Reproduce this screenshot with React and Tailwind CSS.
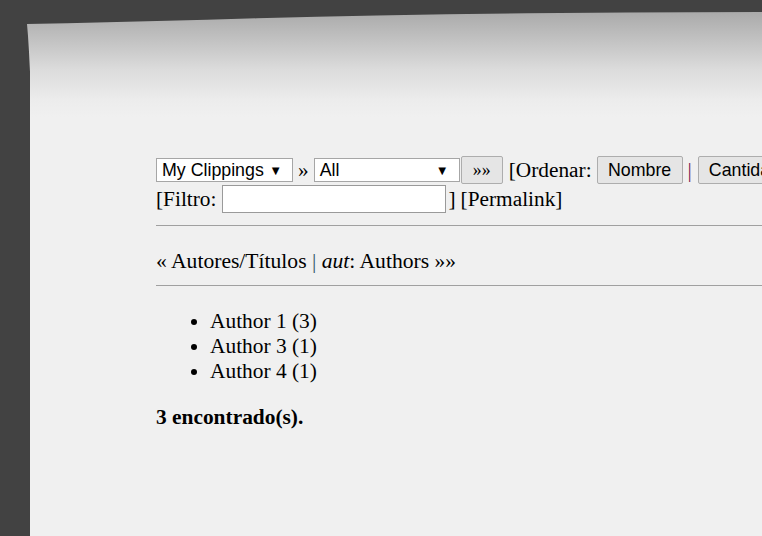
export default function App() {
  const serif = "font-['Liberation_Serif','Times_New_Roman',serif]";
  const sans = "font-['Liberation_Sans',Arial,sans-serif]";
  return (
    <div className="h-[536px] w-[762px] overflow-hidden bg-[#424242] pt-[12px] pl-[27px]">
      <div
        className={`h-[524px] w-[735px] overflow-hidden bg-[linear-gradient(to_bottom,#aaaaaa_0px,#c2c2c2_28px,#dcdcdc_58px,#ececec_88px,#f0f0f0_105px)] [clip-path:polygon(0px_12px,40px_11.2px,80px_10.3px,130px_9px,180px_7.7px,230px_6.3px,290px_4.8px,350px_3.4px,420px_2.2px,500px_1.2px,600px_0.5px,100%_0,100%_100%,3px_100%,3px_60px,2px_40px,1px_24px)] pl-[129px] pt-[144px] text-black ${serif}`}
      >
        <div className="w-[700px]">
          {/* Row 1 */}
          <div className="flex h-[28px] items-center whitespace-nowrap text-[21.33px] leading-[25px]">
            <div className={`flex h-[24px] w-[137px] items-center justify-between border border-[#a6a6a6] bg-white pl-[5px] pr-[10px] text-[17.8px] ${sans}`}>
              <span>My Clippings</span>
              <span className="text-[13px]">▼</span>
            </div>
            <span className="ml-[5px] mr-[5px]">»</span>
            <div className={`flex h-[24px] w-[146px] items-center justify-between border border-[#a6a6a6] bg-white pl-[5px] pr-[10px] text-[17.8px] ${sans}`}>
              <span>All</span>
              <span className="text-[13px]">▼</span>
            </div>
            <button className={`ml-[1px] flex h-[28px] w-[42px] items-center justify-center rounded-[2px] border border-[#adadad] bg-[#e5e5e5] text-[17.8px] ${serif}`}>
              »»
            </button>
            <span className="ml-[6px]">[Ordenar:</span>
            <button className={`ml-[5px] flex h-[28px] w-[86px] items-center justify-center rounded-[2px] border border-[#adadad] bg-[#e5e5e5] text-[17.8px] ${sans}`}>
              Nombre
            </button>
            <span className="ml-[5px] text-[#7a1450]">|</span>
            <button className={`ml-[6px] flex h-[28px] shrink-0 items-center justify-center rounded-[2px] border border-[#adadad] bg-[#e5e5e5] px-[10px] text-[17.8px] ${sans}`}>
              Cantidad
            </button>
          </div>
          {/* Row 2 */}
          <div className="mt-[1px] flex h-[28px] items-center whitespace-nowrap text-[21.33px] leading-[25px]">
            <span>[Filtro:</span>
            <input
              type="text"
              className={`ml-[6px] h-[28px] w-[224px] border border-[#9a9a9a] bg-white px-[2px] text-[17.8px] outline-none ${sans}`}
            />
            <span className="ml-[2px]">]</span>
            <span className="ml-[5px]">[Permalink]</span>
          </div>
          <div className="mt-[12px] h-[1px] w-full bg-[#a0a0a0]" />
          <div className="mt-[23px] h-[25px] text-[21.6px] leading-[25px]">
            « Autores/Títulos <span className="text-[#2f5565]">|</span> <i>aut</i>: Authors »»
          </div>
          <div className="mt-[11px] h-[1px] w-full bg-[#a0a0a0]" />
          <ul className="mt-[23px] list-disc pl-[54px] text-[21.4px] leading-[25px]">
            <li>Author 1 (3)</li>
            <li>Author 3 (1)</li>
            <li>Author 4 (1)</li>
          </ul>
          <p className="mt-[21px] text-[21.4px] font-bold leading-[25px]">3 encontrado(s).</p>
        </div>
      </div>
    </div>
  );
}
